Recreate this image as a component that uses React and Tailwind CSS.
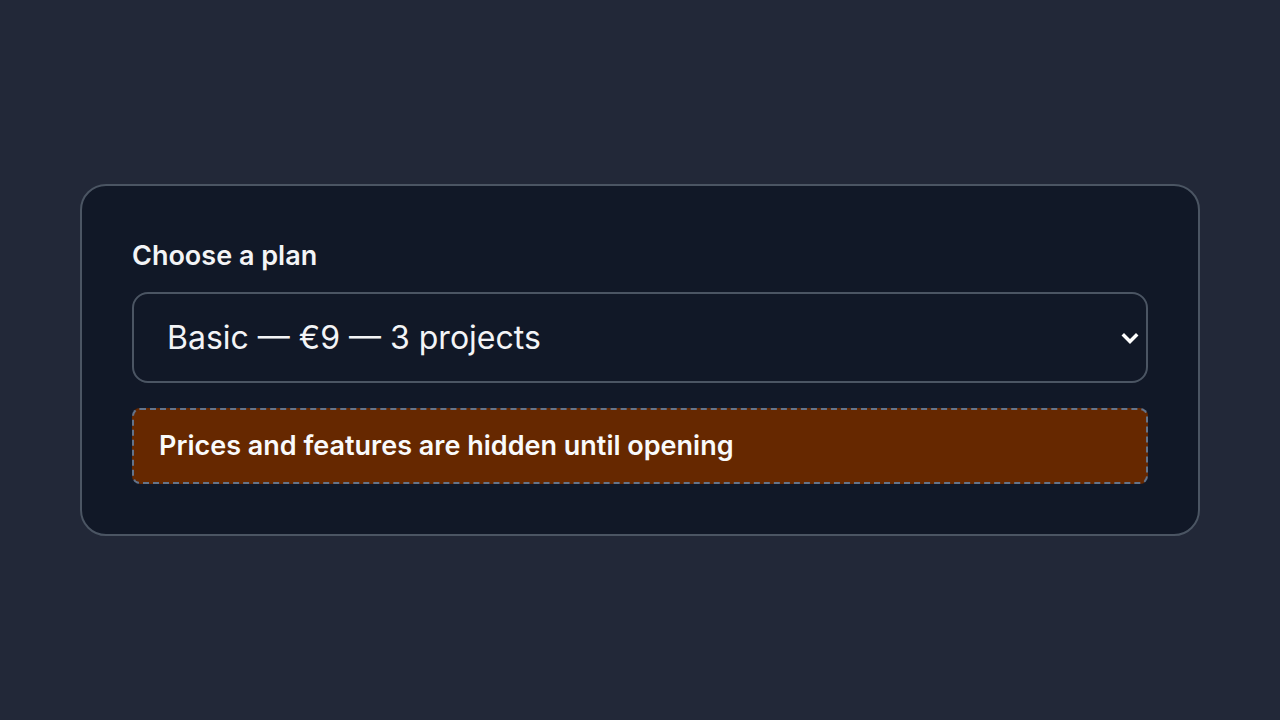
import React, { useState } from "react";

const plans = [
  "Basic — €9 — 3 projects",
  "Pro — €19 — 10 projects",
  "Team — €49 — unlimited projects",
];

const App = () => {
  const [plan, setPlan] = useState(plans[0]);

  return (
    <div
      className="min-h-screen w-full flex items-center justify-center bg-[#222838] px-[80px]"
      style={{ fontFamily: "Inter, 'Noto Sans', sans-serif" }}
    >
      <div className="w-full rounded-[26px] border-2 border-[#4b5563] bg-[#111827] px-[50px] pt-[53px] pb-[50px]">
        <label className="block text-[27px] leading-[34px] font-semibold text-[#f3f4f6] mb-[19px]">
          Choose a plan
        </label>

        <div className="relative">
          <select
            value={plan}
            onChange={(e) => setPlan(e.target.value)}
            className="w-full h-[91px] appearance-none rounded-[16px] border-2 border-[#4b5563] bg-[#111827] pl-[33px] pr-16 text-[32px] text-[#f3f4f6] outline-none"
          >
            {plans.map((p) => (
              <option key={p} value={p}>
                {p}
              </option>
            ))}
          </select>
          <svg
            className="absolute right-[8px] top-1/2 -translate-y-1/2 pointer-events-none"
            width="20"
            height="16"
            viewBox="0 0 20 16"
            fill="none"
          >
            <path
              d="M4 5.5 L10 11.5 L16 5.5"
              stroke="white"
              strokeWidth="3.5"
              strokeLinecap="square"
            />
          </svg>
        </div>

        <div className="mt-[25px] h-[76px] flex items-center rounded-[8px] border-2 border-dashed border-[#64748b] bg-[#662800] px-[25px]">
          <p className="text-[27px] font-semibold text-[#f9fafb]">
            Prices and features are hidden until opening
          </p>
        </div>
      </div>
    </div>
  );
};

export default App;
